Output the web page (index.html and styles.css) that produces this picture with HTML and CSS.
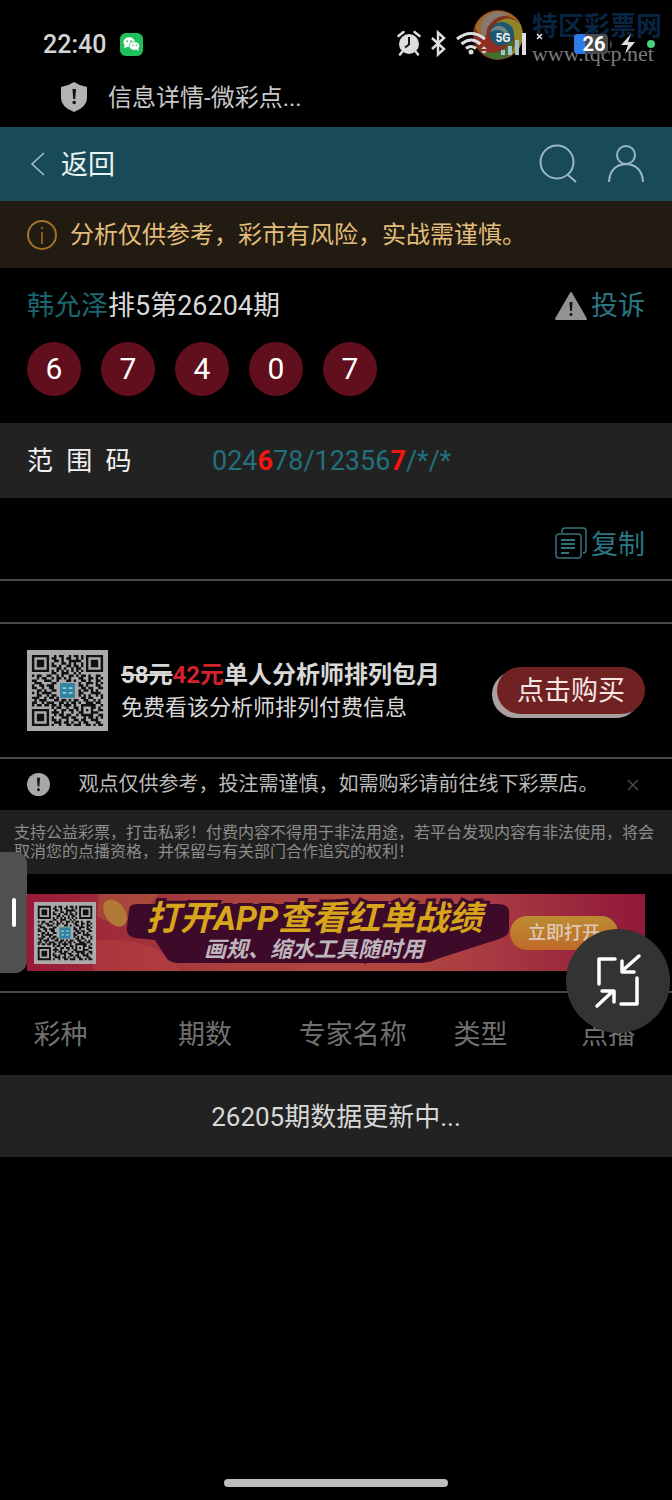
FILE: index.html
```html
<!DOCTYPE html>
<html lang="zh-CN">
<head>
  <meta charset="UTF-8">
  <meta name="viewport" content="width=device-width, initial-scale=1.0">
  <title>信息详情-微彩点播</title>
  <link rel="stylesheet" href="styles.css">
</head>
<body>
  <div class="page">
    <div class="statusbar">
      <span class="time">22:40</span>
      <svg class="wechat" viewBox="0 0 24 24">
        <rect width="24" height="24" rx="6" fill="#1fbf5c"/>
        <ellipse cx="9.5" cy="9.5" rx="6" ry="5" fill="#fff"/>
        <path d="M5 12l-.5 4 4-2z" fill="#fff"/>
        <ellipse cx="15" cy="13.5" rx="5.5" ry="4.5" fill="#fff" stroke="#1fbf5c" stroke-width=".7"/>
        <path d="M17 17l2.5 1.8-.3-3z" fill="#fff"/>
        <g fill="#1fbf5c"><circle cx="7.5" cy="8.5" r=".9"/><circle cx="11.5" cy="8.5" r=".9"/><circle cx="13.5" cy="12.7" r=".8"/><circle cx="17" cy="12.7" r=".8"/></g>
      </svg>
      <svg class="status-icons" viewBox="0 0 260 34">
        <!-- alarm -->
        <circle cx="13" cy="17" r="10" fill="#ddd"/>
        <path d="M13 10v7.5l-4 3" fill="none" stroke="#111" stroke-width="2"/>
        <path d="M2.500 9l5-4M23.500 9l-5-4M6 25l-2 2.500M20 25l2 2.500" stroke="#ddd" stroke-width="2.5" stroke-linecap="round"/>
        <!-- bluetooth -->
        <path d="M36 11l12 11-6 5.5V5.5l6 5.5-12 11" fill="none" stroke="#ddd" stroke-width="2.5"/>
        <!-- wifi -->
        <g fill="none" stroke="#ddd" stroke-width="3">
          <path d="M61 12q14-11 28 0M65.5 17q9.500-8 19 0M70 21.5q5-4 10 0"/>
        </g>
        <circle cx="75" cy="25" r="2.500" fill="#ddd"/>
        <path d="M85 22l3-3 3 3zM85 24l3 3 3-3z" fill="#ccc"/>
        <!-- signal -->
        <path d="M107 28v-5M114 28v-9M121 28V13" stroke="#9fc3cc" stroke-width="4"/>
        <path d="M128 28V6" stroke="#ddd" stroke-width="4"/>
        <text x="107" y="15" text-anchor="middle" class="net-label">5G</text>
        <path d="M141 7l5 5M146 7l-5 5" stroke="#ddd" stroke-width="1.5"/>
        <!-- battery -->
        <path d="M182 7h26q4 0 4 4v12q0 4-4 4h-26q-4 0-4-4V11q0-4 4-4z" fill="#4a4a4c"/>
        <path d="M182 7h7v20h-7q-4 0-4-4V11q0-4 4-4z" fill="#2e7bea"/>
        <path d="M214 13q4 4 0 9z" fill="#4a4a4c"/>
        <text x="198" y="24" text-anchor="middle" class="battery-num">26</text>
        <path d="M235 7l-10 11h7l-3 9 10-12h-7z" fill="#ddd"/>
        <circle cx="255" cy="17" r="4" fill="#48cf80"/>
      </svg>
      <div class="watermark">
        <svg class="wm-logo" viewBox="0 0 52 52">
          <circle cx="26" cy="26" r="25" fill="#a03c26"/>
          <path d="M3 18A25 25 0 0 1 49 16Q38 3 24 9 12 14 11 28 5 25 3 18z" fill="#c8812f"/>
          <path d="M10 12Q22-3 38 6 22 6 15 20 13 30 18 38 6 28 10 12z" fill="#a8988e"/>
          <path d="M49 16Q56 38 36 48 46 36 41 24 36 13 24 14 38 4 49 16z" fill="#b5a830"/>
          <path d="M36 48Q20 55 9 42 24 47 34 38 40 31 38 22 46 34 36 48z" fill="#568a3a"/>
          <circle cx="30" cy="25" r="12" fill="#236f8f"/>
          <path d="M18 23q6-10 15-4 5 5 0 11 1-8-6-9-5 0-9 2z" fill="#8fa6a0"/>
          <path d="M4 28q4 14 17 15 12 0 16-10-8 7-16 2-5-4-6-10-5 6-11 3z" fill="#b5392e"/>
        </svg>
        <div class="wm-text">
          <span class="wm-name">特区彩票网</span>
          <span class="wm-url">www.tqcp.net</span>
        </div>
      </div>
    </div>

    <div class="titlebar">
      <svg class="shield" viewBox="0 0 28 32">
        <path d="M14 1q6 4 13 5v11q0 9-13 14Q1 26 1 17V6q7-1 13-5z" fill="#b3b3b3"/>
        <path d="M12.5 8H16l-.8 10h-2z" fill="#111"/><circle cx="14.2" cy="21.5" r="1.8" fill="#111"/>
      </svg>
      <span class="label">信息详情-微彩点...</span>
    </div>

    <header class="header">
      <a class="back" href="#">
        <svg viewBox="0 0 16 28"><path d="M14 3L2 14l12 11" fill="none" stroke="#a9c0cc" stroke-width="1.5"/></svg>
        <span class="label">返回</span>
      </a>
      <nav class="tools">
        <a href="#" aria-label="搜索"><svg viewBox="0 0 40 40"><circle cx="19" cy="18" r="16.5"/><path d="M30 31l8 7"/></svg></a>
        <a href="#" aria-label="我的"><svg viewBox="0 0 40 40"><circle cx="20" cy="11" r="9"/><path d="M3 38q1-17 17-18 16 1 17 18"/></svg></a>
      </nav>
    </header>

    <div class="warning">
      <svg viewBox="0 0 32 32"><circle cx="16" cy="16" r="14" fill="none" stroke="#a4712a" stroke-width="2"/><path d="M16 13v12M16 8v2" stroke="#a4712a" stroke-width="1.5"/></svg>
      <span class="label">分析仅供参考，彩市有风险，实战需谨慎。</span>
    </div>

    <section class="issue">
      <div class="issue-head">
        <div><a class="expert" href="#">韩允泽</a>排5第26204期</div>
        <a class="link" href="#">
          <svg viewBox="0 0 34 30"><path d="M17 2l15 26H2z" fill="#929292" stroke="#929292" stroke-width="2" stroke-linejoin="round"/><path d="M15.5 11h3l-.6 9h-1.800z" fill="#111"/><circle cx="17" cy="23.5" r="1.500" fill="#111"/></svg>
          投诉
        </a>
      </div>
      <div class="balls">
        <span>6</span><span>7</span><span>4</span><span>0</span><span>7</span>
      </div>
    </section>

    <div class="range">
      <div class="range-name label">范&ensp;围&ensp;码</div>
      <div class="range-code">024<b>6</b>78/12356<b>7</b>/*/*</div>
    </div>

    <div class="copy-row">
      <button class="link" type="button">
        <svg viewBox="0 0 34 34" fill="none" stroke="#38717b" stroke-width="1.5"><rect x="2" y="8" width="25" height="24" rx="3"/><path d="M8 7V5q0-3 3-3h18q3 0 3 3v19q0 3-3 3"/><path d="M7 14h14M7 18h14M7 22h14M7 27h8" stroke-width="2"/></svg>
        复制
      </button>
    </div>

    <section class="promo">
      <svg class="qr" viewBox="-2 -2 33 33"></svg>
      <div class="promo-text">
        <p class="promo-title"><del>58元</del><em>42元</em>单人分析师排列包月</p>
        <p class="promo-sub">免费看该分析师排列付费信息</p>
      </div>
      <button class="buy" type="button">点击购买</button>
    </section>

    <div class="tip">
      <svg viewBox="0 0 24 24"><circle cx="12" cy="12" r="12" fill="#a8a8a8"/><path d="M10.5 5h3l-.6 9h-1.800z" fill="#111"/><circle cx="12" cy="17.5" r="1.500" fill="#111"/></svg>
      <span class="label">观点仅供参考，投注需谨慎，如需购彩请前往线下彩票店。</span>
      <button class="close" type="button" aria-label="关闭"><svg viewBox="0 0 12 12"><path d="M1 1l10 10M11 1L1 11" stroke="#4a4a4a" stroke-width="1.5"/></svg></button>
    </div>

    <p class="statement">支持公益彩票，打击私彩！付费内容不得用于非法用途，若平台发现内容有非法使用，将会取消您的点播资格，并保留与有关部门合作追究的权利！</p>

    <div class="banner-wrap">
      <div class="banner">
        <svg class="banner-bg" viewBox="0 0 618 77" preserveAspectRatio="none">
          <path d="M72 0h60q-34 42-62 22z" fill="#b56b3d" opacity=".4"/>
          <ellipse cx="88" cy="19" rx="10" ry="15" fill="#b07a36" transform="rotate(-35 88 19)"/>
          <path d="M66 77V46q48-4 78 18l10 13z" fill="#b74341" opacity=".5"/>
          <path d="M102 16q0-6 8-6h360q14 0 12 12v14q0 6-10 9l-62 20q-8 4-18 4H150q-8 0-12-7l-10-16-20-2q-10-2-8-12z" fill="#3d0a29"/>
        </svg>
        <svg class="qr qr-small" viewBox="-2 -2 33 33"></svg>
        <div class="slogan">
          <strong>打开APP查看红单战绩</strong>
          <span>画规、缩水工具随时用</span>
        </div>
        <a class="open-app" href="#">立即打开</a>
      </div>
      <div class="side-tab"></div>
      <button class="float-btn" type="button" aria-label="缩小">
        <svg viewBox="0 0 48 56" fill="none" stroke="#fff" stroke-width="3.5" stroke-linecap="round" stroke-linejoin="round">
          <path d="M21 6H5v25M43 25v26H27"/>
          <path d="M45 3L28 18M28 8v11h12M3 53l16-15M8 38h12v11"/>
        </svg>
      </button>
    </div>

    <table class="records">
      <thead>
        <tr><th class="c-type">彩种</th><th class="c-issue">期数</th><th>专家名称</th><th>类型</th><th>点播</th></tr>
      </thead>
      <tbody>
        <tr><td colspan="5">26205期数据更新中...</td></tr>
      </tbody>
    </table>

    <div class="home-bar"></div>
  </div>
  <script src="qr.js"></script>
</body>
</html>
```
FILE: styles.css
```css
* {
  box-sizing: border-box;
}
body {
  margin: 0;
  background: #000;
  color: #d8d8d8;
  font-family: Roboto, "Noto Sans CJK SC", sans-serif;
  font-size: 27px;
}
p {
  margin: 0;
}
a {
  color: inherit;
  text-decoration: none;
}
button {
  padding: 0;
  border: none;
  background: none;
  color: inherit;
  font: inherit;
  cursor: pointer;
}
svg {
  display: block;
  flex: none;
}
.page {
  display: flex;
  flex-direction: column;
  min-height: 100vh;
}
/* CJK glyphs sit low in their line box */
.label {
  padding-bottom: 4px;
}

/* system bars */
.statusbar {
  position: relative;
  display: flex;
  align-items: center;
  height: 67px;
  padding: 21px 16px 0 43px;
}
.time {
  font-size: 25px;
  font-weight: 500;
  color: #d4d4d4;
}
.wechat {
  width: 23px;
  height: 23px;
  margin-left: 14px;
}
.status-icons {
  z-index: 1;
  width: 260px;
  height: 34px;
  margin-left: auto;
}
.battery-num {
  font-size: 20px;
  font-weight: 700;
  fill: #fff;
}
.net-label {
  font-size: 12px;
  font-weight: 700;
  fill: #eee;
}
.watermark {
  position: absolute;
  top: 9px;
  right: 10px;
  display: flex;
  gap: 8px;
  opacity: 0.8;
}
.wm-logo {
  width: 52px;
  height: 52px;
}
.wm-text {
  display: flex;
  flex-direction: column;
}
.wm-name {
  font-size: 26px;
  font-weight: 700;
  line-height: 34px;
  color: #0b2d50;
}
.wm-url {
  font-family: "Liberation Serif", serif;
  font-size: 22px;
  line-height: 22px;
  color: #999;
}
.titlebar {
  display: flex;
  align-items: center;
  gap: 20px;
  height: 60px;
  padding: 0 60px;
  font-size: 24px;
  color: #c8c8c8;
}
.shield {
  width: 28px;
  height: 32px;
}

/* header */
.header {
  display: flex;
  align-items: center;
  justify-content: space-between;
  height: 74px;
  padding: 0 26px 0 30px;
  background: #184b57;
  color: #e8f4f6;
}
.back {
  display: flex;
  align-items: center;
  gap: 15px;
}
.back svg {
  width: 16px;
  height: 28px;
}
.tools {
  display: flex;
  gap: 28px;
}
.tools svg {
  width: 40px;
  height: 40px;
  fill: none;
  stroke: #9db6c6;
  stroke-width: 2;
}
.warning {
  display: flex;
  align-items: center;
  gap: 12px;
  height: 67px;
  padding: 0 26px;
  background: #211b11;
  color: #e3bd7c;
  font-size: 24px;
}
.warning svg {
  width: 32px;
  height: 32px;
}

/* issue */
.issue {
  padding: 20px 27px 27px;
}
.issue-head {
  display: flex;
  align-items: center;
  justify-content: space-between;
  line-height: 36px;
}
.expert {
  color: #1d6670;
}
.link {
  display: flex;
  align-items: center;
  gap: 3px;
  color: #2a7684;
}
.link svg {
  width: 34px;
  height: 34px;
}
.balls {
  display: flex;
  gap: 20px;
  margin-top: 18px;
}
.balls span {
  width: 54px;
  line-height: 54px;
  border-radius: 50%;
  background: #610e1d;
  color: #fff;
  font-size: 30px;
  text-align: center;
}
.range {
  display: flex;
  align-items: center;
  height: 75px;
  padding: 0 27px;
  background: #222;
}
.range-name {
  width: 185px;
  color: #f2f2f2;
  font-size: 26px;
}
.range-code {
  color: #22707e;
}
.range-code b {
  color: #f5170f;
}
.copy-row {
  display: flex;
  justify-content: flex-end;
  height: 83px;
  padding: 8px 27px 0;
  border-bottom: 2px solid #484848;
}

/* promo */
.promo {
  display: flex;
  align-items: center;
  margin-top: 41px;
  padding: 26px 27px;
  border-top: 2px solid #484848;
  border-bottom: 2px solid #484848;
}
.qr {
  width: 81px;
  height: 81px;
  background: #aaa;
}
.promo-text {
  flex: 1;
  padding-left: 13px;
}
.promo-title {
  font-size: 24px;
  font-weight: 700;
  line-height: 34px;
}
.promo-title em {
  color: #d3212d;
  font-style: normal;
}
.promo-sub {
  font-size: 22px;
  line-height: 32px;
}
.buy {
  width: 148px;
  padding-top: 2px;
  line-height: 45px;
  border-radius: 24px;
  background: #702222;
  color: #f6e6e6;
  box-shadow: -5px 4px 0 #aaa0a0;
}
.tip {
  display: flex;
  align-items: center;
  justify-content: space-between;
  height: 51px;
  padding: 0 33px 0 27px;
  font-size: 20px;
  color: #bbb;
}
.tip > svg {
  width: 23px;
  height: 23px;
}
.close svg {
  width: 12px;
  height: 12px;
}
.statement {
  padding: 13px 14px;
  background: #1f1f1f;
  color: #8c8c8c;
  font-size: 16px;
  line-height: 19px;
}

/* banner */
.banner-wrap {
  position: relative;
  padding: 20px 27px;
  border-bottom: 2px solid #484848;
}
.banner {
  position: relative;
  display: flex;
  align-items: center;
  height: 77px;
  padding: 0 27px 0 7px;
  background: linear-gradient(90deg, #981a38, #a83f3e 30%, #b0483f 60%, #a83a42 75%, #90183a);
}
.banner-bg {
  position: absolute;
  left: 0;
  top: 0;
  width: 100%;
  height: 100%;
}
.qr-small {
  position: relative;
  width: 62px;
  height: 62px;
}
.slogan {
  position: relative;
  flex: 1;
  display: flex;
  flex-direction: column;
  align-items: center;
  padding-left: 22px;
  font-style: italic;
  font-weight: 700;
  white-space: nowrap;
  paint-order: stroke fill;
  -webkit-text-stroke: 6px #3d0a29;
}
.slogan strong {
  color: #d6a51c;
  font-size: 34px;
  font-weight: 700;
  line-height: 34px;
}
.slogan span {
  color: #bfb5bc;
  font-size: 22px;
  line-height: 30px;
}
.open-app {
  position: relative;
  width: 108px;
  line-height: 34px;
  border-radius: 17px;
  background: linear-gradient(#bb8c32, #c06a28);
  color: #dccab8;
  font-size: 18px;
  font-weight: 500;
  text-align: center;
}
.side-tab {
  position: absolute;
  left: 0;
  top: -22px;
  width: 27px;
  height: 121px;
  border-radius: 0 12px 12px 0;
  background: #505050;
}
.side-tab::after {
  content: "";
  position: absolute;
  right: 11px;
  top: 46px;
  width: 4px;
  height: 29px;
  border-radius: 2px;
  background: #fff;
}
.float-btn {
  position: absolute;
  right: 2px;
  top: 55px;
  display: flex;
  align-items: center;
  justify-content: center;
  width: 104px;
  height: 104px;
  border-radius: 50%;
  background: #333;
}
.float-btn svg {
  width: 48px;
  height: 56px;
}

/* records */
.records {
  width: 100%;
  table-layout: fixed;
  border-collapse: collapse;
  text-align: center;
}
.records th {
  height: 82px;
  padding: 0 0 4px;
  color: #707070;
  font-weight: 400;
}
.records .c-type {
  width: 18%;
}
.records .c-issue {
  width: 25%;
}
.records td {
  height: 82px;
  padding: 0 0 4px;
  background: #222;
  font-size: 26px;
}
.home-bar {
  width: 224px;
  height: 8px;
  margin: auto auto 13px;
  border-radius: 4px;
  background: #bdbdbd;
}
```
FILE: qr.js
```js
// one string per row, # is a dark module
const rows = [
  '#######..#.##..#.##.#.#######',
  '#.....#.##..#.##..#.#.#.....#',
  '#.###.#..##.#..#####..#.###.#',
  '#.###.#.#...##.#.#..#.#.###.#',
  '#.###.#.##.#..##.##.#.#.###.#',
  '#.....#...##.#..#.##..#.....#',
  '#######.#.#.#.#.#.#.#.#######',
  '........##..###..#.#.........',
  '#.##..##..#.#..##.#.##.#..##.',
  '..#.##..#.##.#.#...##..##.#.#',
  '##...###..#...##.#..##.#..##.',
  '.###....##.........#..###.#.#',
  '#..##.###..........##.#...##.',
  '##..#..##...........##.##..##',
  '..##.#..##.........#.##.#.#..',
  '#.#.####...........##...####.',
  '..##..#.##.........#.#.#..#.#',
  '###..#.##.#.........##.##...#',
  '.#.###...##.##.#.##..##..#.#.',
  '##..#.###..##.#.##.#..###.##.',
  '#.##.##.##.#.###.#..######..#',
  '........#.##..#..##.#...##.#.',
  '#######..#..##.##.#.#.#.#..##',
  '#.....#.###.#...#..##...###..',
  '#.###.#..#.##.##..#.#####..##',
  '#.###.#.#...###.##...#.##.#.#',
  '#.###.#.##.#..#..##.##..###..',
  '#.....#..###.##.#..#.##...##.',
  '#######.#..#..##.###..##.#.##'
];

let d = '';
rows.forEach((row, y) => {
  for (let x = 0; x < row.length; x++) {
    if (row[x] === '#') d += `M${x} ${y}h1v1h-1z`;
  }
});

document.querySelectorAll('.qr').forEach(svg => {
  svg.innerHTML = `
    <path d="${d}" fill="#111"/>
    <rect x="11.5" y="11.5" width="6" height="6" fill="#2f83a3"/>
    <path d="M12.5 13.5H14M15 13.5h1.5M12.5 15.5H14M15 15.5h1.5" stroke="#9cc" stroke-width=".7"/>`;
});
```
